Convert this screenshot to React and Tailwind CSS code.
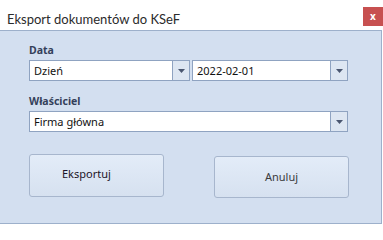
import React from "react";

function Combo({ value, className }) {
  return (
    <div className={"flex h-[21px] bg-white border border-[#8fa3c1] " + className}>
      <div className="flex-1 flex items-center pl-[4px] text-[11px] text-[#111] leading-[14px]">{value}</div>
      <div className="w-[17px] flex items-center justify-center border-l border-[#8fa3c1] bg-[#dde6f2]">
        <svg width="7" height="4" viewBox="0 0 7 4"><path d="M0 0H7L3.5 4Z" fill="#4a5670" /></svg>
      </div>
    </div>
  );
}

export default function App() {
  return (
    <div className="w-[383px] h-[225px] flex flex-col bg-white" style={{ fontFamily: '"Noto Sans", "Open Sans", sans-serif' }}>
      <div className="h-[30px] flex items-start justify-between shrink-0">
        <div className="pl-[7px] pt-[10px] text-[13px] text-[#2b2b2b] leading-[18px] font-['Lato',sans-serif]">Eksport dokumentów do KSeF</div>
        <div className="mt-[7px] w-[20px] h-[19px] bg-[#c75050] flex items-center justify-center text-white text-[10px] font-bold leading-none pb-[2px]">x</div>
      </div>
      <div className="flex-1 bg-[#d3dff0] border-t border-r border-b border-[#9db0cb] mr-[1px] mb-[1px] pl-[29px] pr-[33px] flex flex-col">
        <div className="mt-[12px] text-[10.5px] font-bold text-[#34405a] leading-[14px]">Data</div>
        <div className="mt-[3px] flex gap-[2px]">
          <Combo value="Dzień" className="w-[161px]" />
          <Combo value="2022-02-01" className="flex-1" />
        </div>
        <div className="mt-[13px] text-[10.5px] font-bold text-[#34405a] leading-[14px]">Właściciel</div>
        <div className="mt-[3px]">
          <Combo value="Firma główna" className="w-full" />
        </div>
        <div className="mt-[22px] flex justify-between items-start">
          <div className="w-[135px] h-[43px] rounded-[3px] border border-[#a7b6cd] bg-gradient-to-b from-[#e3ecf8] to-[#d6e1f0] flex items-center pl-[32px] pb-[3px] text-[11px] text-[#1c1427]">Eksportuj</div>
          <div className="mt-[2px] mr-[-1px] w-[135px] h-[42px] rounded-[3px] border border-[#a7b6cd] bg-gradient-to-b from-[#e3ecf8] to-[#d6e1f0] flex items-center justify-center text-[11px] text-[#3a3a3a]">Anuluj</div>
        </div>
      </div>
    </div>
  );
}
